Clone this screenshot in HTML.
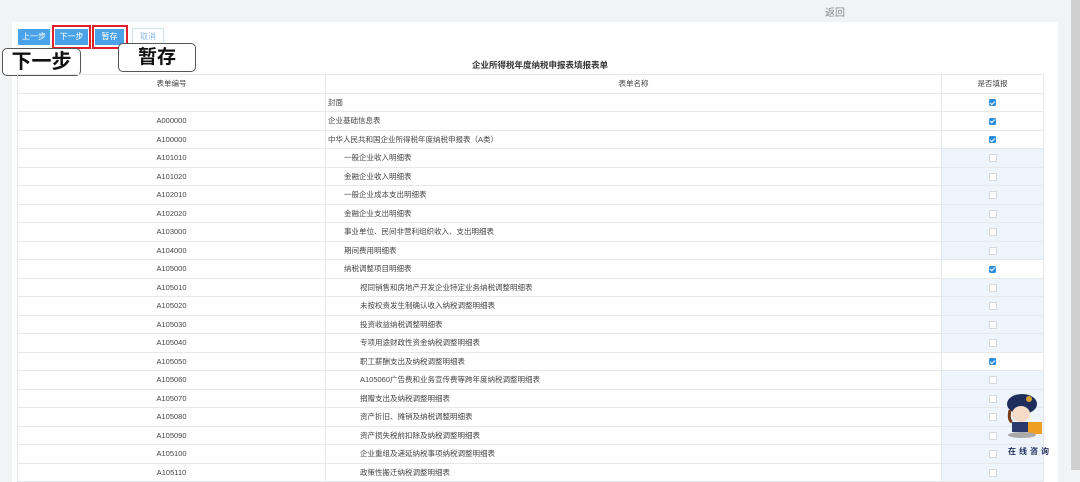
<!DOCTYPE html><html><head><meta charset="utf-8"><style>
body{margin:0;width:1080px;height:470px;overflow:hidden;background:#f2f3f5;font-family:"Liberation Sans","Noto Sans CJK SC",sans-serif;position:relative}
.abs{position:absolute}
.panel{left:12px;top:22px;width:1046px;height:460px;background:#fff}
.btn{top:29px;height:16px;font-size:8px;color:#fff;background:#4aa3e8;text-align:center;line-height:16px}
.red{border:2px solid #e0202a;top:25px;height:20px}
.call{background:#fff;border:1px solid #555;border-radius:5px;font-weight:bold;color:#111;text-align:center}
table{position:absolute;left:17px;top:74px;width:1026px;border-collapse:collapse;table-layout:fixed;font-size:7.5px;color:#444}
td{border:1px solid #e6e8eb;height:17.5px;padding:0;white-space:nowrap;overflow:hidden}
td.c1{text-align:center}
td.c2{padding-left:2px}
td.c3{text-align:center}
td.u{background:#eef4fc}
.ck{display:inline-block;width:7px;height:7px;border-radius:1.5px;background:#2d8ee0;vertical-align:middle;position:relative}
.ck:after{content:"";position:absolute;left:2px;top:0.5px;width:2px;height:4px;border:solid #fff;border-width:0 1.2px 1.2px 0;transform:rotate(45deg)}
.uk{display:inline-block;width:6px;height:6px;border:1px solid #d5d8dc;background:#fff;vertical-align:middle}
.i1{padding-left:18px!important}.i2{padding-left:34px!important}
</style></head><body>
<div class="abs" style="left:825px;top:4px;font-size:10px;color:#888">返回</div>
<div class="abs" style="right:0;top:0;width:9px;height:470px;background:#d0d0d0"></div>
<div class="abs panel"></div>
<div class="abs btn" style="left:18px;width:32px">上一步</div>
<div class="abs red" style="left:52px;width:35px"></div>
<div class="abs btn" style="left:55px;width:33px">下一步</div>
<div class="abs red" style="left:92px;width:32px"></div>
<div class="abs btn" style="left:95px;width:29px">暂存</div>
<div class="abs btn" style="left:132px;width:30px;background:#fff;border:1px solid #cfe2f5;color:#8bbbe8;top:28px">取消</div>
<div class="abs call" style="left:2px;top:48px;width:77px;height:26px;font-size:20px;line-height:26px">下一步</div>
<div class="abs call" style="left:118px;top:43px;width:76px;height:27px;font-size:19px;line-height:27px">暂存</div>
<div class="abs" style="left:0;width:1080px;top:59px;text-align:center;font-size:8.5px;font-weight:bold;color:#333">企业所得税年度纳税申报表填报表单</div>
<table>
<colgroup><col style="width:308px"><col style="width:616px"><col style="width:102px"></colgroup>
<tr><td class="c1">表单编号</td><td class="c2" style="text-align:center;padding:0">表单名称</td><td class="c3">是否填报</td></tr>
<tr><td class="c1"></td><td class="c2">封面</td><td class="c3"><span class="ck"></span></td></tr>
<tr><td class="c1">A000000</td><td class="c2">企业基础信息表</td><td class="c3"><span class="ck"></span></td></tr>
<tr><td class="c1">A100000</td><td class="c2">中华人民共和国企业所得税年度纳税申报表（A类）</td><td class="c3"><span class="ck"></span></td></tr>
<tr><td class="c1">A101010</td><td class="c2 i1">一般企业收入明细表</td><td class="c3 u"><span class="uk"></span></td></tr>
<tr><td class="c1">A101020</td><td class="c2 i1">金融企业收入明细表</td><td class="c3 u"><span class="uk"></span></td></tr>
<tr><td class="c1">A102010</td><td class="c2 i1">一般企业成本支出明细表</td><td class="c3 u"><span class="uk"></span></td></tr>
<tr><td class="c1">A102020</td><td class="c2 i1">金融企业支出明细表</td><td class="c3 u"><span class="uk"></span></td></tr>
<tr><td class="c1">A103000</td><td class="c2 i1">事业单位、民间非营利组织收入、支出明细表</td><td class="c3 u"><span class="uk"></span></td></tr>
<tr><td class="c1">A104000</td><td class="c2 i1">期间费用明细表</td><td class="c3 u"><span class="uk"></span></td></tr>
<tr><td class="c1">A105000</td><td class="c2 i1">纳税调整项目明细表</td><td class="c3"><span class="ck"></span></td></tr>
<tr><td class="c1">A105010</td><td class="c2 i2">视同销售和房地产开发企业特定业务纳税调整明细表</td><td class="c3 u"><span class="uk"></span></td></tr>
<tr><td class="c1">A105020</td><td class="c2 i2">未按权责发生制确认收入纳税调整明细表</td><td class="c3 u"><span class="uk"></span></td></tr>
<tr><td class="c1">A105030</td><td class="c2 i2">投资收益纳税调整明细表</td><td class="c3 u"><span class="uk"></span></td></tr>
<tr><td class="c1">A105040</td><td class="c2 i2">专项用途财政性资金纳税调整明细表</td><td class="c3 u"><span class="uk"></span></td></tr>
<tr><td class="c1">A105050</td><td class="c2 i2">职工薪酬支出及纳税调整明细表</td><td class="c3"><span class="ck"></span></td></tr>
<tr><td class="c1">A105060</td><td class="c2 i2">A105060广告费和业务宣传费等跨年度纳税调整明细表</td><td class="c3 u"><span class="uk"></span></td></tr>
<tr><td class="c1">A105070</td><td class="c2 i2">捐赠支出及纳税调整明细表</td><td class="c3 u"><span class="uk"></span></td></tr>
<tr><td class="c1">A105080</td><td class="c2 i2">资产折旧、摊销及纳税调整明细表</td><td class="c3 u"><span class="uk"></span></td></tr>
<tr><td class="c1">A105090</td><td class="c2 i2">资产损失税前扣除及纳税调整明细表</td><td class="c3 u"><span class="uk"></span></td></tr>
<tr><td class="c1">A105100</td><td class="c2 i2">企业重组及递延纳税事项纳税调整明细表</td><td class="c3 u"><span class="uk"></span></td></tr>
<tr><td class="c1">A105110</td><td class="c2 i2">政策性搬迁纳税调整明细表</td><td class="c3 u"><span class="uk"></span></td></tr>
</table>
<svg class="abs" style="left:1002px;top:390px" width="42" height="50" viewBox="0 0 42 50">
<ellipse cx="20" cy="14" rx="15" ry="10" fill="#1f2d5c"/><circle cx="27" cy="9" r="3" fill="#d9a030"/>
<ellipse cx="19" cy="24" rx="9" ry="8" fill="#f6dcc8"/><path d="M8 20 Q6 30 10 32" stroke="#7a3b1a" stroke-width="3" fill="none"/>
<rect x="10" y="32" width="16" height="10" fill="#2a3a6a"/><rect x="26" y="32" width="14" height="12" fill="#f0a020"/>
<ellipse cx="20" cy="45" rx="14" ry="3" fill="#aaa"/></svg>
<div class="abs" style="left:1008px;top:446px;font-size:8px;font-weight:bold;color:#1f2d5c;letter-spacing:3px">在线咨询</div>
</body></html>
